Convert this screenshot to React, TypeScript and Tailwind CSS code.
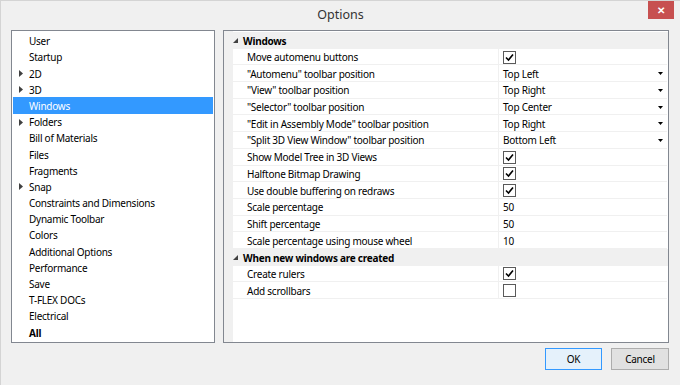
import React from "react";

type Row =
  | { kind: "cat"; label: string }
  | { kind: "check"; label: string; checked: boolean }
  | { kind: "select"; label: string; value: string }
  | { kind: "text"; label: string; value: string };

const treeItems: { label: string; arrow?: boolean; bold?: boolean }[] = [
  { label: "User" },
  { label: "Startup" },
  { label: "2D", arrow: true },
  { label: "3D", arrow: true },
  { label: "Windows" },
  { label: "Folders", arrow: true },
  { label: "Bill of Materials" },
  { label: "Files" },
  { label: "Fragments" },
  { label: "Snap", arrow: true },
  { label: "Constraints and Dimensions" },
  { label: "Dynamic Toolbar" },
  { label: "Colors" },
  { label: "Additional Options" },
  { label: "Performance" },
  { label: "Save" },
  { label: "T-FLEX DOCs" },
  { label: "Electrical" },
  { label: "All", bold: true },
];

const rows: Row[] = [
  { kind: "cat", label: "Windows" },
  { kind: "check", label: "Move automenu buttons", checked: true },
  { kind: "select", label: "\"Automenu\" toolbar position", value: "Top Left" },
  { kind: "select", label: "\"View\" toolbar position", value: "Top Right" },
  { kind: "select", label: "\"Selector\" toolbar position", value: "Top Center" },
  { kind: "select", label: "\"Edit in Assembly Mode\" toolbar position", value: "Top Right" },
  { kind: "select", label: "\"Split 3D View Window\" toolbar position", value: "Bottom Left" },
  { kind: "check", label: "Show Model Tree in 3D Views", checked: true },
  { kind: "check", label: "Halftone Bitmap Drawing", checked: true },
  { kind: "check", label: "Use double buffering on redraws", checked: true },
  { kind: "text", label: "Scale percentage", value: "50" },
  { kind: "text", label: "Shift percentage", value: "50" },
  { kind: "text", label: "Scale percentage using mouse wheel", value: "10" },
  { kind: "cat", label: "When new windows are created" },
  { kind: "check", label: "Create rulers", checked: true },
  { kind: "check", label: "Add scrollbars", checked: false },
];

function Checkbox({ checked }: { checked: boolean }) {
  return (
    <span className="w-[13px] h-[13px] border border-[#5a5a5a] bg-white flex items-center justify-center">
      {checked && (
        <svg width="9" height="9" viewBox="0 0 9 9">
          <path d="M1 4.5 L3.5 7 L8 1.5" fill="none" stroke="#000" strokeWidth="1.6" />
        </svg>
      )}
    </span>
  );
}

function RightArrow() {
  return (
    <svg width="4" height="7" viewBox="0 0 4 7" className="mr-[6px]">
      <path d="M0 0 L4 3.5 L0 7 Z" fill="#404040" />
    </svg>
  );
}

export default function App() {
  return (
    <div
      className="w-[680px] h-[385px] bg-[#f0f0f0] relative border-t border-l border-[#d4d4d4] text-[10px] tracking-[-0.25px] text-black overflow-hidden"
      style={{ fontFamily: '"Noto Sans", "Open Sans", sans-serif' }}
    >
      {/* Title bar */}
      <div className="h-[28px] flex items-center justify-center text-[12.5px] tracking-normal text-[#333]">
        Options
      </div>
      <div className="absolute right-[6px] top-0 w-[26px] h-[18px] bg-[#c75050] flex items-center justify-center text-white text-[10px] font-bold leading-none">
        ✕
      </div>

      {/* Body */}
      <div className="flex gap-[8px] pl-[10px] pt-[1px]">
        {/* Tree */}
        <div className="w-[204px] h-[313px] bg-white border border-[#828790] px-[1px] pt-[1.6px]">
          {treeItems.map((it) => {
            const sel = it.label === "Windows";
            return (
              <div
                key={it.label}
                className={
                  "h-[16.2px] flex items-center pl-[6px] leading-none pt-[1px] " +
                  (sel ? "bg-[#3399ff] text-white " : "") +
                  (it.bold ? "font-bold" : "")
                }
              >
                <span className="w-[10px] flex items-center">{it.arrow && <RightArrow />}</span>
                <span>{it.label}</span>
              </div>
            );
          })}
        </div>

        {/* Property grid */}
        <div className="w-[446px] h-[313px] bg-white border border-[#828790] relative">
          <div className="absolute left-0 top-0 bottom-0 w-[9px] bg-[#f0f0f0]" />
          <div className="relative pt-[1px]">
            {rows.map((r, i) =>
              r.kind === "cat" ? (
                <div key={i} className="h-[16.7px] flex items-center bg-[#f0f0f0] font-bold leading-none pt-[1px]">
                  <span className="w-[19px] flex justify-center pl-[3px]">
                    <svg width="5" height="5" viewBox="0 0 5 5">
                      <path d="M5 0 L5 5 L0 5 Z" fill="#404040" />
                    </svg>
                  </span>
                  <span>{r.label}</span>
                </div>
              ) : (
                <div key={i} className="h-[16.7px] flex ml-[9px] mr-[1px] border-b border-[#f0f0f0] leading-none">
                  <div className="w-[266px] flex items-center pl-[14px] pt-[1px] border-r border-[#f0f0f0]">
                    {r.label}
                  </div>
                  <div className="flex-1 flex items-center pl-[4px] pr-[4px] pt-[1px]">
                    {r.kind === "check" && <Checkbox checked={r.checked} />}
                    {r.kind === "text" && <span>{r.value}</span>}
                    {r.kind === "select" && (
                      <>
                        <span className="flex-1">{r.value}</span>
                        <svg width="5" height="3" viewBox="0 0 5 3">
                          <path d="M0 0 L5 0 L2.5 3 Z" fill="#000" />
                        </svg>
                      </>
                    )}
                  </div>
                </div>
              )
            )}
          </div>
        </div>
      </div>

      {/* Footer */}
      <div className="flex justify-end gap-[9px] pr-[11px] pt-[5px]">
        <button className="w-[57px] h-[22px] bg-[#e5f1fb] border border-[#3399ff] leading-none">
          OK
        </button>
        <button className="w-[58px] h-[22px] bg-[#e1e1e1] border border-[#adadad] leading-none">
          Cancel
        </button>
      </div>
    </div>
  );
}
